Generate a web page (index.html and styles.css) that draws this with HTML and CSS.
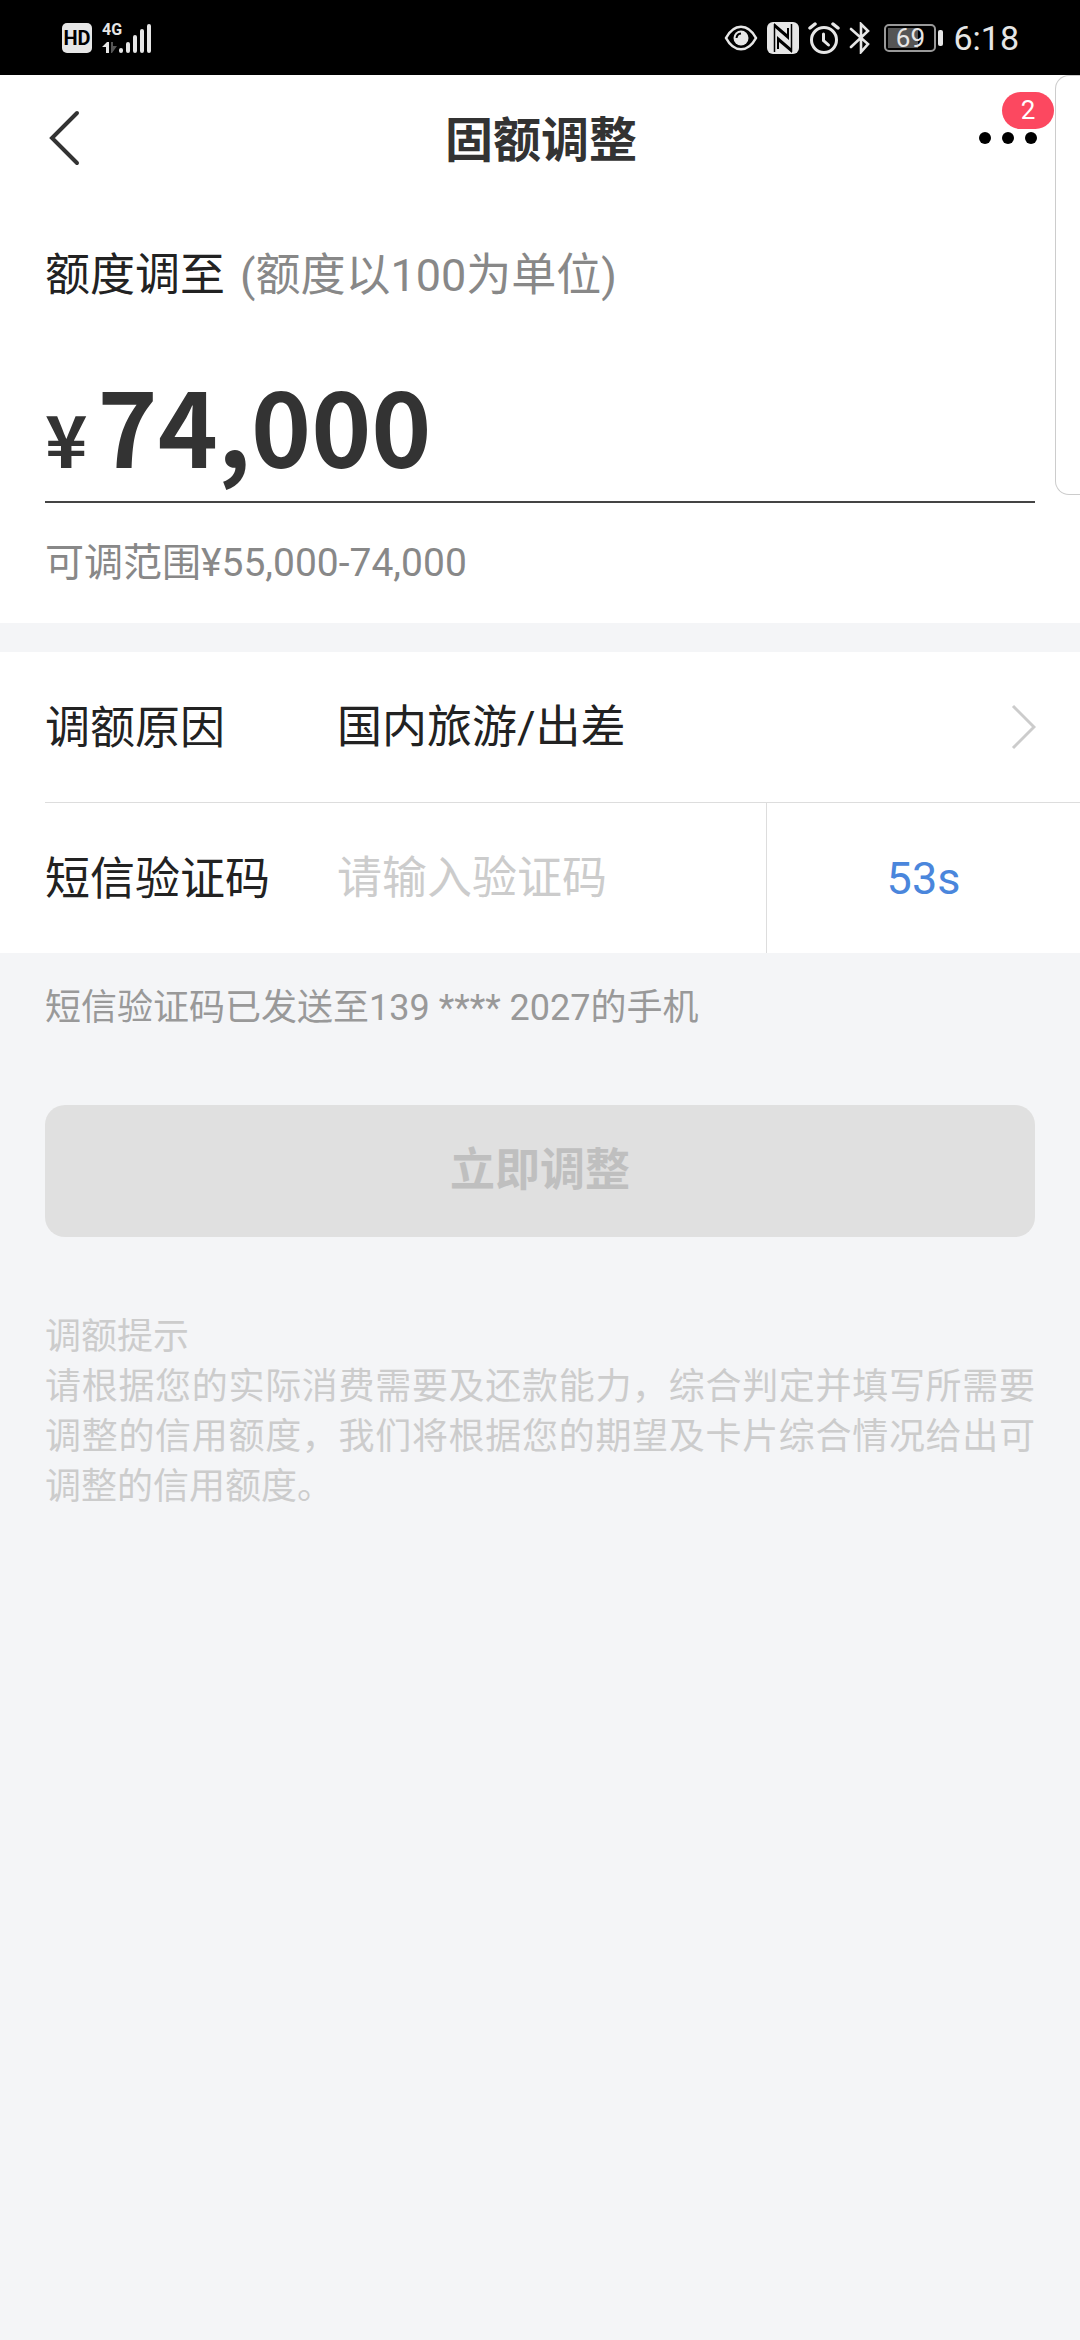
FILE: index.html
```html
<!DOCTYPE html>
<html lang="zh-CN">
<head>
    <meta charset="UTF-8">
    <meta name="viewport" content="width=device-width, initial-scale=1.0">
    <title>固额调整</title>

    <link rel="stylesheet" href="styles.css">
</head>
<body>
    <div class="status-bar">
        <div class="status-left">
            <span class="hd">HD</span>
            <div class="network">
                <span class="network-type">4G</span>
                <svg width="50" height="32" viewBox="0 0 50 32" aria-hidden="true">
                    <path d="M4 31V25H0L5 20H7V31Z" fill="#e6e6e6"/>
                    <path d="M9 20H11V24H15L10 31H9Z" fill="#555"/>
                    <g stroke="#e6e6e6" stroke-width="4" stroke-linecap="round">
                        <path d="M19 28V29M26 22V29M33 15V29M40 9V29M47 4V29"/>
                    </g>
                </svg>
            </div>
        </div>
        <div class="status-right">
            <svg width="34" height="28" viewBox="0 0 34 28" aria-hidden="true">
                <path d="M2 14C10 -1 24 -1 32 14C24 29 10 29 2 14Z" fill="none" stroke="#e6e6e6" stroke-width="2.6" stroke-linejoin="round"/>
                <circle cx="17" cy="14" r="7.5" fill="#e6e6e6"/>
                <path d="M12.5 14A5 5 0 0 1 17 9.5" fill="none" stroke="#000" stroke-width="2"/>
            </svg>
            <svg width="32" height="32" viewBox="0 0 32 32" aria-hidden="true">
                <rect width="32" height="32" rx="6" fill="#e6e6e6"/>
                <path d="M7 1L20 12V6H22V18L7 5ZM10 14L25 27V31L12 20V27H10Z"/>
                <path d="M7.500 2V30M24.500 2V30" stroke="#000" stroke-width="1.500"/>
            </svg>
            <svg width="32" height="32" viewBox="0 0 32 32" aria-hidden="true">
                <g fill="none" stroke="#e6e6e6" stroke-linecap="round">
                    <circle cx="16" cy="18" r="12.5" stroke-width="3"/>
                    <path d="M2 6L7 2M30 6L25 2" stroke-width="3.5"/>
                    <path d="M15.5 12V18.5L20.5 23" stroke-width="3"/>
                </g>
            </svg>
            <svg width="22" height="32" viewBox="0 0 22 32" aria-hidden="true">
                <path d="M2 7L19 22L12 30V2L19 9L2 25" fill="none" stroke="#e6e6e6" stroke-width="2.6" stroke-linecap="round"/>
            </svg>
            <div class="battery"><span class="battery-level">69</span></div>
            <span class="clock">6:18</span>
        </div>
    </div>

    <header class="header">
        <button type="button" class="icon-button" aria-label="返回">
            <svg width="32" height="56" viewBox="0 0 32 56">
                <path d="M29 3L4 28L29 53" fill="none" stroke="#333" stroke-width="4" stroke-linecap="round"/>
            </svg>
        </button>
        <h1>固额调整</h1>
        <button type="button" class="icon-button more" aria-label="更多">
            <svg width="60" height="14" viewBox="0 0 60 14">
                <circle cx="7" cy="7" r="6"/>
                <circle cx="30" cy="7" r="6"/>
                <circle cx="53" cy="7" r="6"/>
            </svg>
            <span class="badge">2</span>
        </button>
    </header>
    <div class="side-panel"></div>

    <form>
        <section class="amount">
            <label class="amount-label" for="amount">额度调至<span class="unit">(额度以100为单位)</span></label>
            <div class="amount-field">
                <span class="currency">¥</span>
                <input type="text" id="amount" inputmode="numeric" value="74,000">
            </div>
            <p class="range">可调范围¥55,000-74,000</p>
        </section>

        <section class="fields">
            <div class="row">
                <label for="reason">调额原因</label>
                <select id="reason">
                    <option>国内旅游/出差</option>
                </select>
                <svg class="arrow" width="26" height="46" viewBox="0 0 26 46" aria-hidden="true">
                    <path d="M3 2L24 23L3 44" fill="none" stroke="#ccc" stroke-width="3"/>
                </svg>
            </div>
            <div class="row">
                <label for="code">短信验证码</label>
                <input type="text" id="code" inputmode="numeric" placeholder="请输入验证码">
                <button type="button" class="countdown">53s</button>
            </div>
        </section>

        <p class="sent">短信验证码已发送至139 **** 2027的手机</p>
        <button type="submit" class="submit" disabled>立即调整</button>
    </form>

    <section class="tips">
        <h2>调额提示</h2>
        <p>请根据您的实际消费需要及还款能力，综合判定并填写所需要调整的信用额度，我们将根据您的期望及卡片综合情况给出可调整的信用额度。</p>
    </section>
</body>
</html>
```

FILE: styles.css
```css
* {
    box-sizing: border-box;
}

body {
    margin: 0;
    font-family: Roboto, "Noto Sans CJK SC", sans-serif;
    font-size: 45px;
    background-color: #f4f5f7;
    color: #222;
    position: relative;
    min-height: 100vh;
}

h1, h2, p {
    margin: 0;
}

button, input, select {
    font: inherit;
    color: inherit;
    background: none;
    border: none;
    padding: 0;
    margin: 0;
}

svg {
    display: block;
}

/* Phone status bar */
.status-bar {
    height: 75px;
    padding: 0 61px 0 62px;
    background-color: #000;
    color: #e6e6e6;
    display: flex;
    justify-content: space-between;
    align-items: center;
}

.status-left, .status-right {
    display: flex;
    align-items: center;
    gap: 10px;
}

.hd {
    width: 30px;
    height: 30px;
    border-radius: 5px;
    background-color: #e6e6e6;
    color: #000;
    font-size: 20px;
    font-weight: bold;
    line-height: 30px;
    text-align: center;
}

.network {
    position: relative;
}

.network-type {
    position: absolute;
    top: 0;
    left: 0;
    font-size: 16px;
    font-weight: bold;
    line-height: 16px;
}

.battery {
    position: relative;
    width: 52px;
    height: 28px;
    margin: 0 8px 0 4px;
    padding: 2px;
    border: 2px solid #999;
    border-radius: 5px;
}

/* Battery tip */
.battery::after {
    content: "";
    position: absolute;
    top: 4px;
    right: -9px;
    width: 5px;
    height: 16px;
    border-radius: 2px;
    background-color: #e6e6e6;
}

.battery-level {
    display: block;
    background: linear-gradient(to right, #555 69%, #000 69%);
    font-size: 26px;
    line-height: 20px;
    text-align: center;
}

.clock {
    font-size: 34px;
}

.status-right {
    gap: 9px;
}

/* Title bar */
.header {
    height: 126px;
    padding: 0 40px 0 48px;
    background-color: #fff;
    display: flex;
    justify-content: space-between;
    align-items: center;
}

.header h1 {
    flex: 1;
    padding-top: 6px;
    color: #333;
    font-size: 48px;
    line-height: 72px;
    text-align: center;
}

.icon-button {
    width: 56px;
}

.more {
    position: relative;
    width: 62px;
}

.badge {
    position: absolute;
    right: -14px;
    bottom: 16px;
    width: 52px;
    height: 37px;
    border-radius: 19px;
    background-color: #fc4860;
    color: #fff;
    font-size: 26px;
    line-height: 37px;
    text-align: center;
}

/* Edge of the drawer on the right */
.side-panel {
    position: absolute;
    top: 75px;
    right: 0;
    width: 25px;
    height: 420px;
    border: 1px solid #ccc;
    border-right: none;
    border-radius: 14px 0 0 14px;
    background-color: #fff;
}

.amount {
    padding: 39px 45px 30px;
    background-color: #fff;
}

.amount-label {
    display: block;
    line-height: 72px;
}

.unit {
    margin-left: 15px;
    color: #888;
}

.amount-field {
    display: flex;
    align-items: baseline;
    gap: 10px;
    height: 152px;
    margin: 39px 0 30px;
    border-bottom: 2px solid #444;
    color: #333;
    font-family: "Noto Sans CJK SC", sans-serif;
    font-weight: bold;
}

.currency {
    font-size: 72px;
    line-height: 100px;
}

.amount-field input {
    flex: 1;
    min-width: 0;
    height: 144px;
    font-size: 102px;
}

.range {
    color: #888;
    font-size: 39px;
    line-height: 60px;
}

.fields {
    margin-top: 29px;
    padding-left: 45px;
    background-color: #fff;
}

.row {
    display: flex;
    align-items: center;
    height: 150px;
}

.row + .row {
    height: 151px;
    border-top: 1px solid #ddd;
}

.row label {
    width: 292px;
    padding-bottom: 6px;
}

.row select, .row input {
    flex: 1;
    min-width: 0;
    height: 100%;
    appearance: none;
}

.row input::placeholder {
    color: #ccc;
}

.arrow {
    margin-right: 44px;
}

.countdown {
    width: 314px;
    height: 100%;
    border-left: 1px solid #ddd;
    color: #4a86dc;
}

.sent {
    padding: 25px 45px 0;
    color: #999;
    font-size: 36px;
    line-height: 60px;
}

.submit {
    display: block;
    width: calc(100% - 90px);
    height: 132px;
    margin: 67px 45px 0;
    padding-bottom: 10px;
    border-radius: 20px;
    background-color: #e0e0e0;
    color: #bfbfbf;
    font-weight: bold;
}

.tips {
    padding: 75px 45px;
    color: #ccc;
    font-size: 36px;
    line-height: 50px;
    text-align: justify;
}

.tips h2 {
    font-size: 36px;
    font-weight: normal;
}
```
